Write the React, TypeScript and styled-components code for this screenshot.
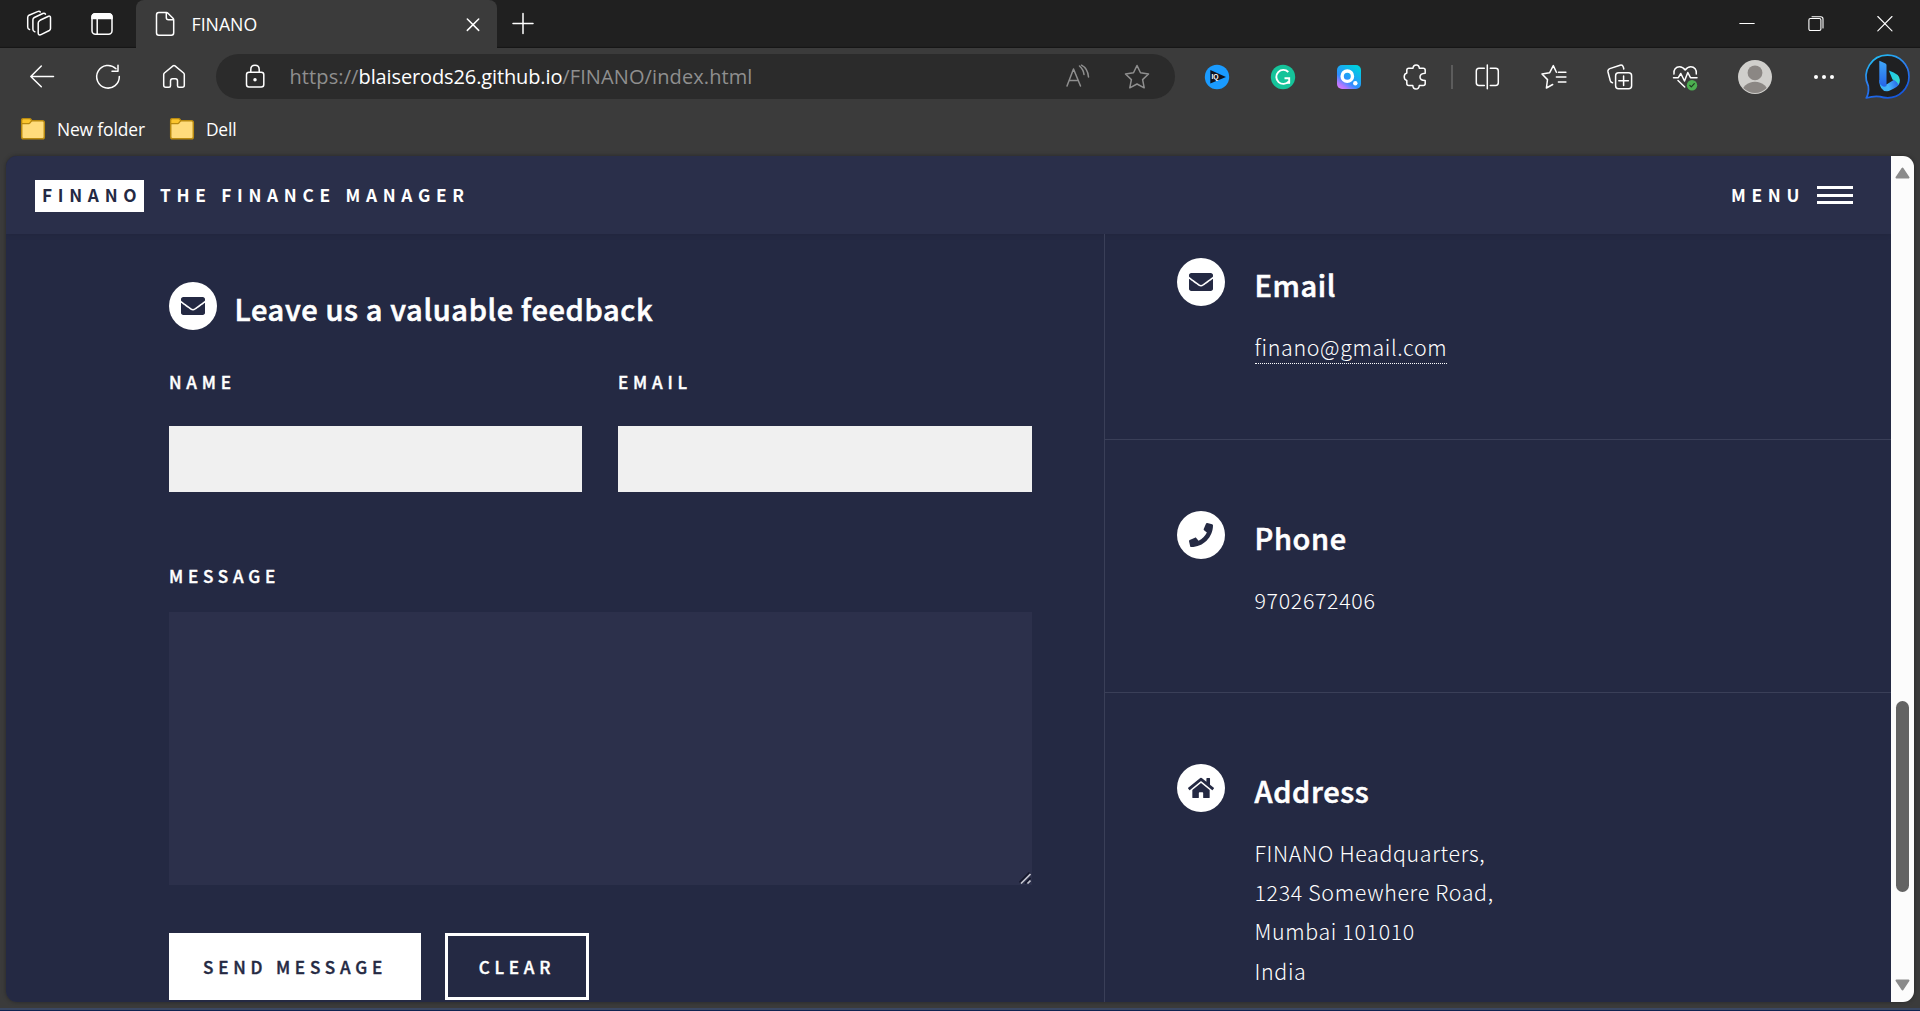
import React from 'react';
import styled, { createGlobalStyle, css } from 'styled-components';
import { FaEnvelope, FaPhone, FaHome } from 'react-icons/fa';

const SOURCE = "'Noto Sans CJK SC', 'Noto Sans', sans-serif";
const SEGOE = "'Open Sans', 'Noto Sans', sans-serif";
const NAVY = '#242943';
const PANEL = '#2a2f4a';

const Global = createGlobalStyle`
  * { box-sizing: border-box; }
  body { margin: 0; background: #3b3b3b; overflow: hidden; }
`;

const Window = styled.div`
  display: flex;
  flex-direction: column;
  width: 1920px;
  height: 1011px;
  background: #3b3b3b;
  overflow: hidden;
  font-family: ${SEGOE};
  color: #fff;
`;

/* ---------- browser chrome ---------- */

const Svg = styled.svg<{ $size?: number; $tone?: string; $weight?: number }>`
  display: block;
  flex: none;
  width: ${(p) => p.$size ?? 26}px;
  height: ${(p) => p.$size ?? 26}px;
  fill: none;
  stroke: ${(p) => p.$tone ?? '#fff'};
  stroke-width: ${(p) => p.$weight ?? 1.5};
  stroke-linecap: round;
  stroke-linejoin: round;
  overflow: visible;
`;

const TabStrip = styled.div`
  display: flex;
  height: 48px;
  flex: none;
  background: #202020;
  box-shadow: inset 0 -2px 1px -1px #161616;
`;

const StripTools = styled.div`
  display: flex;
  align-items: center;
  gap: 37px;
  width: 136px;
  padding-left: 26px;
`;

const Tab = styled.div`
  display: flex;
  align-items: center;
  width: 361px;
  height: 48px;
  padding: 0 16px 0 16px;
  background: #3b3b3b;
  border-radius: 8px 8px 0 0;
`;

const TabTitle = styled.span`
  flex: 1;
  padding-left: 13.5px;
  font-size: 17.7px;
  line-height: 24px;
`;

const NewTab = styled.div`
  display: flex;
  align-items: center;
  padding-left: 13px;
`;

const WindowButtons = styled.div`
  display: flex;
  align-items: center;
  gap: 53px;
  margin-left: auto;
  padding-right: 27px;
`;

const Toolbar = styled.div`
  display: flex;
  align-items: center;
  height: 57px;
  flex: none;
  padding-left: 29px;
`;

const NavButtons = styled.div`
  display: flex;
  gap: 40px;
  width: 187px;
`;

const AddressBar = styled.div`
  display: flex;
  align-items: center;
  width: 959px;
  height: 45px;
  padding: 0 25px 0 26px;
  background: #2b2b2b;
  border-radius: 23px;
`;

const Url = styled.div`
  flex: 1;
  padding-left: 21.5px;
  font-size: 20px;
  line-height: 30px;
  letter-spacing: 0.1px;
  color: #8f8f8f;
  white-space: nowrap;
`;

const Host = styled.span`
  color: #fff;
  letter-spacing: -0.12px;
`;

const AddressTools = styled.div`
  display: flex;
  gap: 33px;
`;

const Extensions = styled.div`
  display: flex;
  align-items: center;
  gap: 40px;
  padding-left: 29px;
`;

const Separator = styled.div`
  width: 2px;
  height: 24px;
  margin: 0 -19px 0 -17px;
  background: #5c5c5c;
`;

const BingButton = styled.div`
  margin-left: -13px;
`;

const Bookmarks = styled.div`
  display: flex;
  align-items: center;
  gap: 24px;
  height: 51px;
  flex: none;
  padding: 0 0 3px 20px;
`;

const Bookmark = styled.div`
  display: flex;
  align-items: center;
  gap: 11px;
  font-size: 17.4px;
  line-height: 24px;
  letter-spacing: -0.12px;
  white-space: nowrap;
`;

/* ---------- web page ---------- */

const Viewport = styled.div`
  display: flex;
  width: 1908px;
  height: 846px;
  flex: none;
  margin-left: 6px;
  border-radius: 11px;
  overflow: hidden;
  box-shadow: 0 0 4px rgba(0, 0, 0, 0.35);
`;

const Page = styled.div`
  display: flex;
  flex-direction: column;
  width: 1885px;
  background: ${NAVY};
  font-family: ${SOURCE};
`;

const Header = styled.header`
  display: flex;
  align-items: center;
  height: 78px;
  flex: none;
  padding: 2px 38px 0 29px;
  background: ${PANEL};
  box-shadow: 0 0 6px rgba(0, 0, 0, 0.12);
`;

const caps = css`
  font-family: ${SOURCE};
  font-weight: 500;
  font-size: 17.1px;
  letter-spacing: 4.77px;
  line-height: 32px;
  white-space: nowrap;
  -webkit-text-stroke: 0.4px currentColor;
`;

const headerCaps = css`
  ${caps}
  height: 32px;
  font-weight: 700;
  font-size: 17.3px;
  letter-spacing: 5.7px;
  line-height: 30px;
  -webkit-text-stroke: 0;
`;

const LogoMark = styled.strong`
  ${headerCaps}
  width: 109px;
  padding-left: 7px;
  background: #fff;
  color: ${NAVY};
`;

const Tagline = styled.span`
  ${headerCaps}
  padding-left: 16px;
`;

const Menu = styled.a`
  ${headerCaps}
  display: flex;
  justify-content: space-between;
  width: 122px;
  margin-left: auto;
`;

const Burger = styled.span`
  display: flex;
  flex-direction: column;
  justify-content: space-between;
  width: 36px;
  height: 18px;
  margin-top: 6px;
`;

const BurgerLine = styled.span`
  height: 3px;
  background: #fff;
`;

const Contact = styled.section`
  display: flex;
  flex: 1;
  min-height: 0;
`;

const FormColumn = styled.div`
  width: 1098px;
  padding: 48px 0 0 163px;
  flex: none;
`;

const Form = styled.form`
  width: 863px;
`;

const IconBadge = styled.span`
  display: flex;
  align-items: center;
  justify-content: center;
  flex: none;
  width: 48px;
  height: 48px;
  border-radius: 50%;
  background: #fff;
  color: ${NAVY};
`;

const FormTitle = styled.div`
  display: flex;
  height: 84px;
  gap: 17.5px;
`;

const Heading = styled.h3`
  margin: 0;
  padding-top: 1px;
  font-size: 29px;
  font-weight: 500;
  letter-spacing: 0.65px;
  line-height: 50px;
  white-space: nowrap;
  -webkit-text-stroke: 0.6px currentColor;
`;

const FieldRow = styled.div`
  display: grid;
  grid-template-columns: 413px 414px;
  column-gap: 36px;
`;

const Label = styled.label<{ $gap: number }>`
  ${caps}
  display: block;
  height: 32px;
  margin-bottom: ${(p) => p.$gap}px;
`;

const Input = styled.input`
  display: block;
  width: 100%;
  height: 66px;
  border: 0;
  padding: 0 20px;
  background: #f0f0f0;
`;

const MessageField = styled.div`
  position: relative;
  padding-top: 68px;
`;

const TextArea = styled.textarea`
  display: block;
  width: 100%;
  height: 273px;
  margin: 0;
  border: 0;
  background: #2c304b;
  resize: none;
`;

const ResizeGrip = styled.svg`
  position: absolute;
  right: 1px;
  bottom: 1px;
  width: 12px;
  height: 12px;
  fill: none;
`;

const Actions = styled.div`
  display: flex;
  gap: 24px;
  padding-top: 48px;
`;

const Button = styled.button<{ $primary?: boolean }>`
  ${caps}
  width: ${(p) => (p.$primary ? 252 : 144)}px;
  height: 67px;
  padding: 0;
  border: 3px solid #fff;
  background: ${(p) => (p.$primary ? '#fff' : 'transparent')};
  color: ${(p) => (p.$primary ? NAVY : '#fff')};
`;

const InfoColumn = styled.div`
  flex: 1;
  border-left: 1px solid #3a3f58;
`;

const InfoItem = styled.section<{ $first?: boolean }>`
  display: flex;
  gap: 29.5px;
  height: ${(p) => (p.$first ? 206 : 253)}px;
  padding: ${(p) => (p.$first ? 24 : 71)}px 0 0 72px;
  border-bottom: 1px solid #3a3f58;
  &:last-child { border-bottom: 0; }
`;

const InfoBody = styled.div`
  display: flex;
  flex-direction: column;
  align-items: flex-start;
`;

const InfoText = styled.p`
  margin: 17.5px 0 0;
  font-size: 21.4px;
  font-weight: 300;
  letter-spacing: 0.66px;
  line-height: 39.4px;
  white-space: nowrap;
`;

const MailLink = styled.a`
  padding-bottom: 1px;
  color: #fff;
  border-bottom: 1px dotted #fff;
`;

const ScrollTrack = styled.div`
  display: flex;
  flex-direction: column;
  align-items: center;
  width: 23px;
  padding: 11px 0 11px;
  background: #fcfcfc;
`;

const Thumb = styled.div`
  width: 13px;
  height: 191px;
  margin: 522px 0 auto;
  border-radius: 7px;
  background: #636363;
`;

const Arrow = styled.svg`
  display: block;
  width: 15px;
  height: 12px;
  fill: #8b8b8b;
  stroke: #8b8b8b;
  stroke-width: 2;
  stroke-linejoin: round;
`;

const Taskbar = styled.div`
  height: 3px;
  margin-top: auto;
  flex: none;
  background: #0f2350;
  border-top: 2px solid #3a4763;
`;

const Folder = () => (
  <Svg viewBox="0 0 26 26" $tone="#b98a10">
    <path d="M1.700 8V4.500Q1.700 2.700 3.500 2.700H9.500Q10.800 2.700 11.500 4.700H22.500Q24.300 4.700 24.300 6.500V21Q24.300 22.800 22.500 22.800H3.500Q1.700 22.800 1.700 21Z" fill="#ffdc7c" />
    <path d="M1.700 7V4.500Q1.700 2.700 3.500 2.700H9.500Q10.800 2.700 11.800 4.700L9.800 7Q9 7.700 8 7.700H1.700Z" fill="#fbc52e" strokeWidth="1.200" />
  </Svg>
);

const IqIcon = () => (
  <Svg viewBox="0 0 26 26">
    <circle cx="13" cy="13" r="12.200" fill="#1a9bff" stroke="none" />
    <path d="M6.300 6L22 12.900L6.300 19.500Z" fill="#10131f" stroke="none" />
    <text x="7.400" y="15.200" fill="#fff" stroke="none" fontFamily="'Liberation Sans', sans-serif" fontWeight="700" fontSize="6.800">IQ</text>
  </Svg>
);

const GrammarIcon = () => (
  <Svg viewBox="0 0 26 26">
    <circle cx="13" cy="13" r="12.200" fill="#15c39a" stroke="none" />
    <path d="M18.300 8A7 7 0 1 0 18.600 17.500M14.500 14.300H19.200V19.300" strokeWidth="1.900" strokeLinecap="butt" strokeLinejoin="miter" />
    <path d="M16 19.800L20 15.500V19.800Z" fill="#fff" stroke="none" />
  </Svg>
);

const SearchIcon = () => (
  <Svg viewBox="0 0 26 26">
    <defs>
      <linearGradient id="q" x1="0" y1="1" x2="0.700" y2="0">
        <stop offset="0" stopColor="#e87bff" />
        <stop offset="0.200" stopColor="#b178ff" />
        <stop offset="0.420" stopColor="#2f8dff" />
        <stop offset="1" stopColor="#00cfe0" />
      </linearGradient>
    </defs>
    <rect x="1" y="1" width="24" height="24" rx="5" fill="url(#q)" stroke="none" />
    <circle cx="11.300" cy="12.200" r="5.200" strokeWidth="3.400" />
    <circle cx="19.300" cy="19.300" r="2.200" fill="#fff" stroke="none" />
  </Svg>
);

const BingIcon = () => (
  <Svg viewBox="0 0 45 45" $size={45}>
    <defs>
      <linearGradient id="ring" x1="0.100" y1="0" x2="0.600" y2="1">
        <stop offset="0" stopColor="#20c4f4" />
        <stop offset="0.500" stopColor="#2c7df0" />
        <stop offset="1" stopColor="#1558e0" />
      </linearGradient>
      <linearGradient id="stem" x1="0" y1="0" x2="0" y2="1">
        <stop offset="0" stopColor="#3ea6f8" />
        <stop offset="1" stopColor="#2563e8" />
      </linearGradient>
      <linearGradient id="base" x1="0" y1="0.500" x2="1" y2="0.300">
        <stop offset="0" stopColor="#35b4f6" />
        <stop offset="0.400" stopColor="#46b5fa" />
        <stop offset="1" stopColor="#2457e6" />
      </linearGradient>
      <linearGradient id="leaf" x1="0" y1="0" x2="1" y2="1">
        <stop offset="0" stopColor="#18c7ee" />
        <stop offset="1" stopColor="#3bdcc8" />
      </linearGradient>
    </defs>
    <path d="M22.700 1.200A21.300 21.300 0 0 1 22.700 43.800Q18.500 43.800 15 42.600Q8.500 41.800 1.300 44Q4.200 39 3.300 32A21.300 21.300 0 0 1 22.700 1.200Z" fill="#1f2022" stroke="url(#ring)" strokeWidth="1.700" />
    <path d="M14.300 26Q14.500 37.300 22 37.300Q25 37 31.500 33Q34.800 31 34.800 26.500L31 24.500L21.500 30.500Z" fill="url(#base)" stroke="none" />
    <path d="M14.300 7Q14.500 6.700 15 7L20.500 9.500Q21.500 10 21.500 11V32Q18 34.500 14.300 29Z" fill="url(#stem)" stroke="none" />
    <path d="M23.800 16.500Q34.800 20 34.900 26Q34.800 29 33 31Q33 27.500 27.500 25.500Z" fill="url(#leaf)" stroke="none" />
  </Svg>
);

export default function App() {
  return (
    <Window>
      <Global />
      <TabStrip>
        <StripTools>
          <Svg viewBox="0 0 26 26">
            <path d="M14 9.300L22.500 5.200Q24.500 4.700 24.500 6.700V17.500Q24.500 18.800 23.300 19.500L14.500 23.800Q12.200 24.400 12.200 22V12Q12.200 10.300 14 9.300Z" />
            <path d="M8.800 20.800Q6.900 20.300 6.900 18.300V8.800Q6.900 7.300 8.300 6.500L16.800 2.500Q18.700 1.900 19.500 3.200" />
            <path d="M3.500 18.500Q1.700 18 1.700 16V6.500Q1.700 5 3 4.200L11.500 .6Q13.500 0 14.300 1" />
          </Svg>
          <Svg viewBox="0 0 26 26">
            <rect x="3" y="2.800" width="20" height="20.400" rx="3.500" />
            <path d="M3 7.500V6Q3 2.800 6.500 2.800H19.500Q23 2.800 23 6V7.500Z" fill="#fff" />
            <path d="M8.200 8V23" />
          </Svg>
        </StripTools>
        <Tab>
          <Svg viewBox="0 0 26 26">
            <path d="M6.800 1.500H14.500Q15.300 1.500 16 2.200L21 7.200Q21.700 8 21.700 8.800V21.800Q21.700 24.300 19.300 24.300H6.800Q4.500 24.300 4.500 21.800V4Q4.500 1.500 6.800 1.500ZM14.300 1.800V6.500Q14.300 8.800 16.500 8.800H21.500" />
          </Svg>
          <TabTitle>FINANO</TabTitle>
          <Svg viewBox="0 0 16 16" $size={16}>
            <path d="M2.300 3L13.700 14.400M13.700 3L2.300 14.400" />
          </Svg>
        </Tab>
        <NewTab>
          <Svg viewBox="0 0 26 26">
            <path d="M3 12.500H23M13 2.500V22.500" />
          </Svg>
        </NewTab>
        <WindowButtons>
          <Svg viewBox="0 0 16 16" $size={16} $weight={1.1}>
            <path d="M.8 7.500H15.200" />
          </Svg>
          <Svg viewBox="0 0 16 16" $size={16} $weight={1.1}>
            <rect x=".9" y="2.500" width="12" height="12" rx="1.500" />
            <path d="M4 .7H12.800Q15 .7 15 3V12" />
          </Svg>
          <Svg viewBox="0 0 16 16" $size={16} $weight={1.1}>
            <path d="M.8 .5L15 14.800M15 .5L.8 14.800" />
          </Svg>
        </WindowButtons>
      </TabStrip>

      <Toolbar>
        <NavButtons>
          <Svg viewBox="0 0 26 26">
            <path d="M24.500 12.500H1.800M12.300 2L1.800 12.500L12.300 22.800" />
          </Svg>
          <Svg viewBox="0 0 26 26">
            <path d="M21 4.800A11.300 11.300 0 1 0 24.300 12.500M23 1.200V7.200H17" />
          </Svg>
          <Svg viewBox="0 0 26 26">
            <path d="M2.700 10.500Q2.700 9.700 3.400 9L12 1.800Q13 1 14 1.800L22.600 9Q23.300 9.700 23.300 10.500V21.200Q23.300 23.200 21.300 23.200H18Q16.500 23.200 16.500 21.700V17Q16.500 14.700 14.500 14.700H11.500Q9.500 14.700 9.500 17V21.700Q9.500 23.200 8 23.200H4.700Q2.700 23.200 2.700 21.200Z" />
          </Svg>
        </NavButtons>
        <AddressBar>
          <Svg viewBox="0 0 26 26">
            <rect x="4.500" y="8.300" width="17.300" height="14.700" rx="2.500" />
            <path d="M8.800 8.300V5.500Q8.800 1.300 13 1.300T17.200 5.500V8.300" />
            <circle cx="13" cy="15.700" r="1" fill="#fff" />
          </Svg>
          <Url>
            https://<Host>blaiserods26.github.io</Host>/FINANO/index.html
          </Url>
          <AddressTools>
            <Svg viewBox="0 0 26 26" $tone="#8f8f8f">
              <path d="M2 22L8.500 5L15.500 22M4.500 16.500H13M14.500 2Q18.500 5.500 19 10.500M16.500 1.200Q22.800 4.500 23.500 13" />
            </Svg>
            <Svg viewBox="0 0 26 26" $tone="#8f8f8f">
              <path d="M13 1.500L16.500 8.800L24.500 10L18.600 15.600L20.200 23.800L13 20L5.800 23.800L7.400 15.600L1.500 10L9.500 8.800Z" />
            </Svg>
          </AddressTools>
        </AddressBar>
        <Extensions>
          <IqIcon />
          <GrammarIcon />
          <SearchIcon />
          <Svg viewBox="0 0 26 26">
            <path d="M4.800 9V6.300Q4.800 4.300 6.800 4.300H11Q11.200 .9 14.200 .9T17.300 4.300H21.200Q23.200 4.300 23.200 6.300V9.300Q18 9.600 18 13T23.200 16.600V19.500Q23.200 21.500 21.200 21.500H17.300Q17 25 14 25T10.800 21.500H6.800Q4.800 21.500 4.800 19.500V16.500Q2.200 15.800 2.200 12.800T4.800 9Z" />
          </Svg>
          <Separator />
          <Svg viewBox="0 0 26 26">
            <path d="M13.300 .9V24.800M10.300 4.300H5Q2.300 4.300 2.300 7V18.700Q2.300 21.400 5 21.400H10.300M16.300 4.300H21.600Q24.300 4.300 24.300 7V18.700Q24.300 21.400 21.600 21.400H16.300" />
          </Svg>
          <Svg viewBox="0 0 26 26">
            <path d="M16.400 8.300L13.300 1.600L9.700 8.700L2 10L7.500 15.600L6.400 24L12.700 20.500M18.400 8.300H25.900M16.400 13H25.900M18.400 18H25.900" />
          </Svg>
          <Svg viewBox="0 0 26 26">
            <rect x="9.600" y="8.800" width="16" height="16" rx="3" />
            <path d="M17.600 12V21.600M12.800 16.800H22.400M6.500 18.800Q4.800 18.500 4.300 16.800L2 8Q1.500 5.500 3.800 4.600L14.100 1.200Q16.500 .6 17.300 2.900L17.800 5" />
          </Svg>
          <Svg viewBox="0 0 26 26">
            <path d="M2 10C1.200 5.500 4 2.700 7.500 2.700Q10.800 2.700 13.200 6Q15.500 2.700 18.800 2.700C22.300 2.700 25 5.500 24.300 10M1.500 13.700H6.300L8.800 9.500L12.500 17L15.800 8.500L18.500 13.700H25M6 16.500L12.700 23" />
            <circle cx="20" cy="21.200" r="5.200" fill="#4caf50" stroke="none" />
            <path d="M17.800 21.400L19.300 22.900L22.300 19.700" stroke="#1e3a20" strokeWidth="1.200" />
          </Svg>
          <Svg viewBox="0 0 34 34" $size={34}>
            <clipPath id="avatar"><circle cx="17" cy="17" r="16" /></clipPath>
            <circle cx="17" cy="17" r="17" fill="#d0cfcc" stroke="none" />
            <circle cx="17" cy="12.800" r="7.400" fill="#8b8784" stroke="none" />
            <ellipse cx="17" cy="34" rx="13.500" ry="12.300" fill="#8b8784" stroke="none" clipPath="url(#avatar)" />
          </Svg>
          <Svg viewBox="0 0 26 26">
            <g fill="#fff" stroke="none">
              <circle cx="4" cy="13" r="2" />
              <circle cx="12" cy="13" r="2" />
              <circle cx="20" cy="13" r="2" />
            </g>
          </Svg>
          <BingButton><BingIcon /></BingButton>
        </Extensions>
      </Toolbar>

      <Bookmarks>
        <Bookmark><Folder />New folder</Bookmark>
        <Bookmark><Folder />Dell</Bookmark>
      </Bookmarks>

      <Viewport>
        <Page>
          <Header>
            <LogoMark>FINANO</LogoMark>
            <Tagline>THE FINANCE MANAGER</Tagline>
            <Menu>
              MENU
              <Burger><BurgerLine /><BurgerLine /><BurgerLine /></Burger>
            </Menu>
          </Header>
          <Contact>
            <FormColumn>
              <Form>
                <FormTitle>
                  <IconBadge><FaEnvelope size={24} /></IconBadge>
                  <Heading>Leave us a valuable feedback</Heading>
                </FormTitle>
                <FieldRow>
                  <div><Label $gap={28}>NAME</Label><Input /></div>
                  <div><Label $gap={28}>EMAIL</Label><Input /></div>
                </FieldRow>
                <MessageField>
                  <Label $gap={20}>MESSAGE</Label>
                  <TextArea />
                  <ResizeGrip viewBox="0 0 12 12">
                    <path d="M.5 10.500L10.500 .5M6 11.500L11.500 6" stroke="#14162a" strokeWidth="1.600" />
                    <path d="M2 11.500L11.500 2M8.500 11.500L11.500 8.500" stroke="#c4c5cf" strokeWidth="1.600" />
                  </ResizeGrip>
                </MessageField>
                <Actions>
                  <Button type="button" $primary>SEND MESSAGE</Button>
                  <Button type="button">CLEAR</Button>
                </Actions>
              </Form>
            </FormColumn>
            <InfoColumn>
              <InfoItem $first>
                <IconBadge><FaEnvelope size={24} /></IconBadge>
                <InfoBody>
                  <Heading>Email</Heading>
                  <InfoText><MailLink>finano@gmail.com</MailLink></InfoText>
                </InfoBody>
              </InfoItem>
              <InfoItem>
                <IconBadge><FaPhone size={24} /></IconBadge>
                <InfoBody>
                  <Heading>Phone</Heading>
                  <InfoText>9702672406</InfoText>
                </InfoBody>
              </InfoItem>
              <InfoItem>
                <IconBadge><FaHome size={26} /></IconBadge>
                <InfoBody>
                  <Heading>Address</Heading>
                  <InfoText>
                    FINANO Headquarters,<br />1234 Somewhere Road,<br />Mumbai 101010<br />India
                  </InfoText>
                </InfoBody>
              </InfoItem>
            </InfoColumn>
          </Contact>
        </Page>
        <ScrollTrack>
          <Arrow viewBox="0 0 15 12"><path d="M7.500 1.500L13.500 10.500H1.500Z" /></Arrow>
          <Thumb />
          <Arrow viewBox="0 0 15 12"><path d="M7.500 10.500L13.500 1.500H1.500Z" /></Arrow>
        </ScrollTrack>
      </Viewport>
      <Taskbar />
    </Window>
  );
}
